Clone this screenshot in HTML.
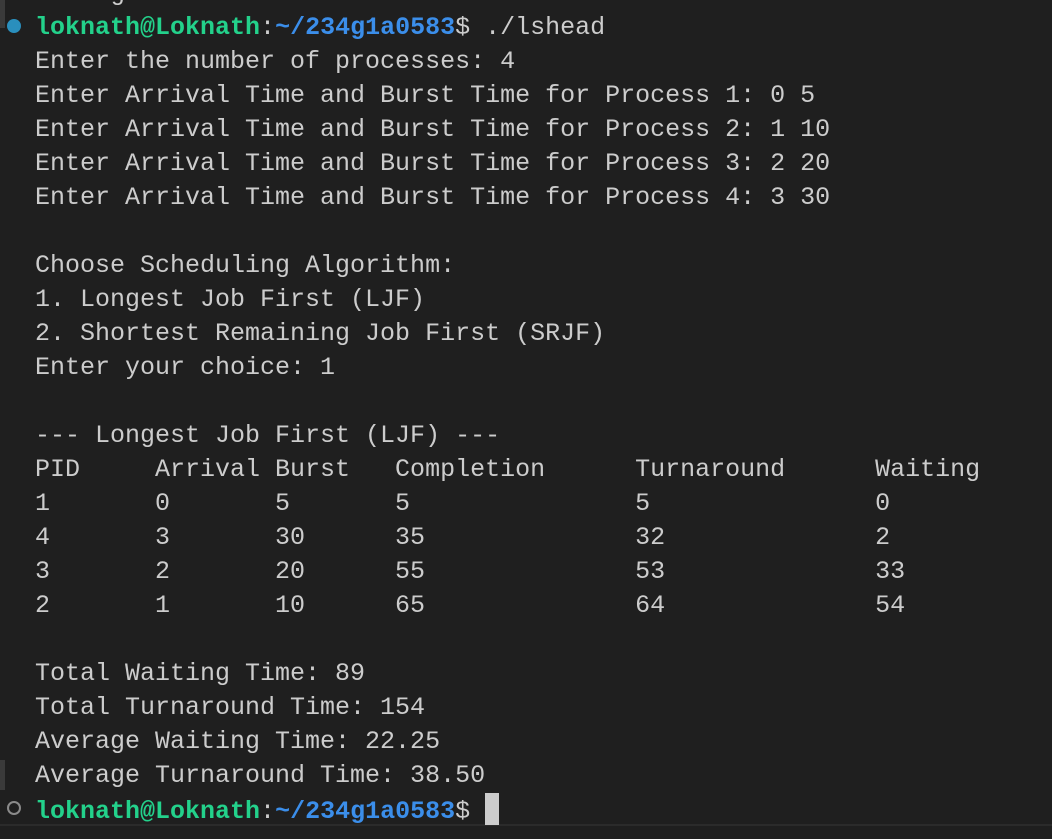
<!DOCTYPE html>
<html><head><style>
html,body{margin:0;padding:0;background:#1f1f1f;width:1052px;height:839px;overflow:hidden}
pre{position:absolute;left:35px;top:-23px;margin:0;font-family:"Liberation Mono","DejaVu Sans Mono",monospace;font-size:25px;line-height:34px;color:#cccccc}
.g{color:#23d18b;font-weight:bold}.b{color:#3b8eea;font-weight:bold}
.cur{display:inline-block;width:14px;height:32px;background:#cccccc;vertical-align:-7px}
.bar{position:absolute;left:0;width:5px;background:#3a3a3a}
.dot{position:absolute;left:7px;width:14px;height:14px;border-radius:50%;box-sizing:border-box}
</style></head><body>
<div class="bar" style="top:0;height:28px"></div>
<div class="bar" style="top:760px;height:30px"></div>
<div class="dot" style="top:19px;background:#2a8fbd"></div>
<div class="dot" style="top:801px;border:2px solid #8a8a8a"></div>
<div style="position:absolute;left:0;top:824px;width:1052px;height:2px;background:#2b2b2b"></div>
<pre>Average Turnaround Time: 15.00
<span class="g">loknath@Loknath</span>:<span class="b">~/234g1a0583</span>$ ./lshead
Enter the number of processes: 4
Enter Arrival Time and Burst Time for Process 1: 0 5
Enter Arrival Time and Burst Time for Process 2: 1 10
Enter Arrival Time and Burst Time for Process 3: 2 20
Enter Arrival Time and Burst Time for Process 4: 3 30

Choose Scheduling Algorithm:
1. Longest Job First (LJF)
2. Shortest Remaining Job First (SRJF)
Enter your choice: 1

--- Longest Job First (LJF) ---
PID     Arrival Burst   Completion      Turnaround      Waiting
1       0       5       5               5               0
4       3       30      35              32              2
3       2       20      55              53              33
2       1       10      65              64              54

Total Waiting Time: 89
Total Turnaround Time: 154
Average Waiting Time: 22.25
Average Turnaround Time: 38.50
<span class="g">loknath@Loknath</span>:<span class="b">~/234g1a0583</span>$ <span class="cur"></span></pre>
</body></html>
